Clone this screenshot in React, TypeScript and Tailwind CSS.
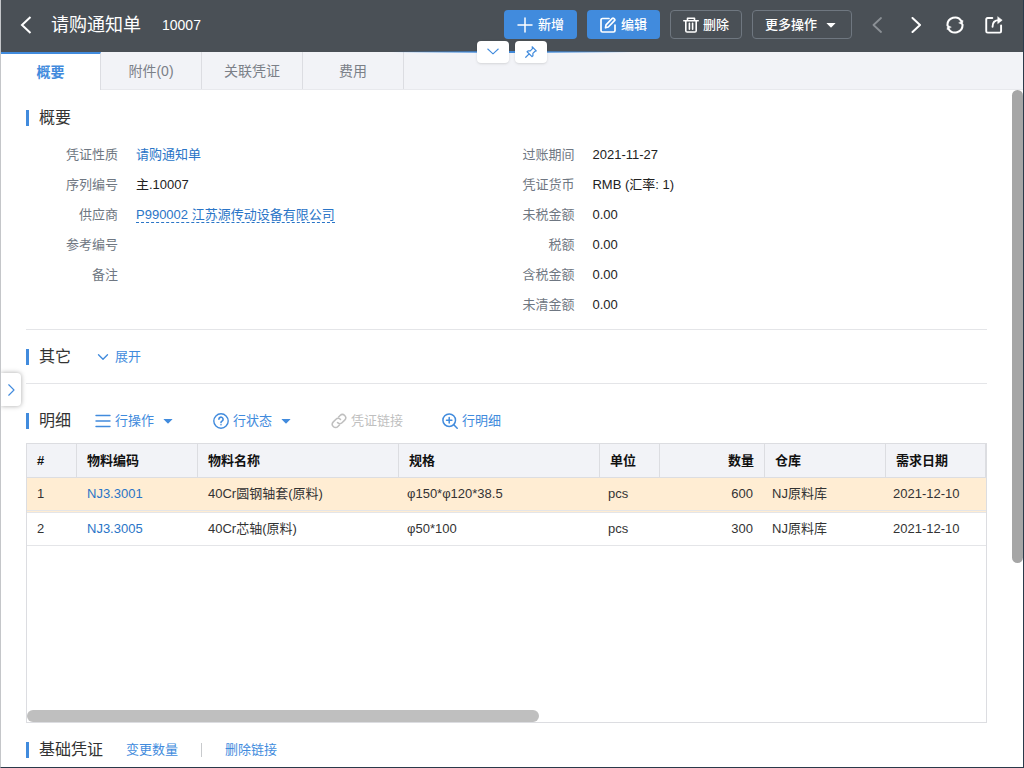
import { useState } from "react";
import type { ReactNode } from "react";
import { clsx } from "clsx";

type Field = { label: string; value?: string; kind?: "link" | "dashed" };

const leftFields: Field[] = [
  { label: "凭证性质", value: "请购通知单", kind: "link" },
  { label: "序列编号", value: "主.10007" },
  { label: "供应商", value: "P990002 江苏源传动设备有限公司", kind: "dashed" },
  { label: "参考编号" },
  { label: "备注" },
];

const rightFields: Field[] = [
  { label: "过账期间", value: "2021-11-27" },
  { label: "凭证货币", value: "RMB (汇率: 1)" },
  { label: "未税金额", value: "0.00" },
  { label: "税额", value: "0.00" },
  { label: "含税金额", value: "0.00" },
  { label: "未清金额", value: "0.00" },
];

const rows = [
  { id: 1, code: "NJ3.3001", name: "40Cr圆钢轴套(原料)", spec: "φ150*φ120*38.5", unit: "pcs", qty: 600, store: "NJ原料库", date: "2021-12-10" },
  { id: 2, code: "NJ3.3005", name: "40Cr芯轴(原料)", spec: "φ50*100", unit: "pcs", qty: 300, store: "NJ原料库", date: "2021-12-10" },
];

const tabs = ["概要", "附件(0)", "关联凭证", "费用"];

function Icon({ children, className = "size-4", width = 1.5 }: { children: ReactNode; className?: string; width?: number }) {
  return (
    <svg
      viewBox="0 0 16 16"
      className={clsx("shrink-0", className)}
      fill="none"
      stroke="currentColor"
      strokeWidth={width}
      strokeLinecap="round"
      strokeLinejoin="round"
      aria-hidden="true"
    >
      {children}
    </svg>
  );
}

function Caret({ className }: { className?: string }) {
  return (
    <svg viewBox="0 0 12 12" className={clsx("size-3 shrink-0", className)} fill="currentColor" aria-hidden="true">
      <path d="M2 4h8a.3.3 0 0 1 .2.600L6.500 8.300a.7.7 0 0 1-1 0L1.800 4.600A.3.3 0 0 1 2 4z" />
    </svg>
  );
}

function SectionTitle({ children }: { children: ReactNode }) {
  return (
    <h2 className="flex items-center gap-[10px] text-base leading-6 text-[#333]">
      <span className="h-4 w-[3px] bg-[#418bdd]" />
      {children}
    </h2>
  );
}

function FieldList({ fields }: { fields: Field[] }) {
  return (
    <dl>
      {fields.map((f) => (
        <div key={f.label} className="flex h-[30px] items-center gap-[18px]">
          <dt className="w-[92px] text-right text-[#6f7782]">{f.label}</dt>
          <dd className="text-[#222]">
            {f.kind ? (
              <a href="#" className={clsx("text-[#2a75c7]", f.kind === "dashed" && "border-b border-dashed border-[#2a75c7]")}>
                {f.value}
              </a>
            ) : (
              f.value
            )}
          </dd>
        </div>
      ))}
    </dl>
  );
}

function Header() {
  return (
    <header className="flex h-[52px] shrink-0 items-center bg-[#4a5056] pr-[10px] pb-[3px] pl-[17px] text-white">
      <button type="button" aria-label="返回" className="flex size-4 items-center justify-center">
        <svg viewBox="0 0 12 18" className="h-[18px] w-3" fill="none" stroke="currentColor" strokeWidth="2" aria-hidden="true">
          <path d="M10.5 1 2 9l8.500 8" />
        </svg>
      </button>
      <h1 className="ml-[17px] text-lg">请购通知单</h1>
      <span className="ml-[21px] text-sm">10007</span>

      <div className="ml-auto flex gap-[10px] text-[13px] font-medium">
        <button type="button" className="flex h-[29px] items-center gap-[5px] rounded bg-[#418bdd] px-[13px]">
          <Icon>
            <path d="M8 1v14M1 8h14" />
          </Icon>
          新增
        </button>
        <button type="button" className="flex h-[29px] items-center gap-[5px] rounded bg-[#418bdd] px-[13px]">
          <Icon width={1.7}>
            <path d="M9 1.500H2.500a1.500 1.500 0 0 0-1.500 1.500v10.500A1.500 1.500 0 0 0 2.500 15h11a1.500 1.500 0 0 0 1.500-1.500V8" />
            <path d="M5.500 10.800 6 7.800 12.300 1.400a1 1 0 0 1 1.400 0l.8.8a1 1 0 0 1 0 1.400L8.300 10z" />
          </Icon>
          编辑
        </button>
        <button type="button" className="flex h-[29px] items-center gap-1 rounded border border-[#6f7780] px-3">
          <Icon width={1.6}>
            <path d="M.8 3.800h14.400M4.500 3.800V1.200h7v2.600M2.800 3.800v9.900c0 .8.500 1.300 1.300 1.300h7.800c.8 0 1.300-.5 1.300-1.300V3.800M6.400 6.200v6M9.600 6.200v6" />
          </Icon>
          删除
        </button>
        <button type="button" className="flex h-[29px] items-center gap-2 rounded border border-[#6f7780] pr-[14px] pl-3">
          更多操作
          <Caret />
        </button>
      </div>

      <nav className="ml-[5px] flex">
        <button type="button" disabled aria-label="上一条" className="flex h-8 w-[39px] items-center justify-center text-[#8b9095]">
          <Icon className="size-4" width={1.8}>
            <path d="M12 1 4.500 8l7.500 7" />
          </Icon>
        </button>
        <button type="button" aria-label="下一条" className="flex h-8 w-[39px] items-center justify-center">
          <Icon className="size-4" width={2}>
            <path d="m4.500 1 7.500 7-7.500 7" />
          </Icon>
        </button>
        <button type="button" aria-label="刷新" className="flex h-8 w-[39px] items-center justify-center">
          <Icon className="size-[18px]" width={1.8}>
            <path d="M1.300 8.300A6.700 6.700 0 0 1 13.800 4.700M14.700 7.700A6.700 6.700 0 0 1 2.200 11.300" />
            <path d="m15 4.200-.4 3.500-3-1.500zM1 11.800l.4-3.500 3 1.500z" fill="currentColor" strokeWidth="0.5" />
          </Icon>
        </button>
        <button type="button" aria-label="在新窗口打开" className="flex h-8 w-[39px] items-center justify-center">
          <Icon className="size-[18px]" width={1.7}>
            <path d="M6.500 1.800H2.300c-.8 0-1.200.5-1.200 1.200v10.600c0 .8.500 1.200 1.200 1.200h10.800c.8 0 1.200-.5 1.200-1.200V8.500" />
            <path d="M6.700 9.500c0-3.500 2-5.800 5.800-5.800" />
            <path d="M11.500.8 15.300 3.700l-3.800 2.900z" fill="currentColor" strokeWidth="0.500" />
          </Icon>
        </button>
      </nav>
    </header>
  );
}

export default function App() {
  const [activeTab, setActiveTab] = useState("概要");
  const [selected, setSelected] = useState(1);

  return (
    <div className="relative flex h-screen flex-col overflow-hidden border-r border-b border-l border-r-[#2b3a4a] border-b-[#2b3a4a] border-l-[#c4c6c9] bg-white font-['Liberation_Sans','Noto_Sans_CJK_SC',sans-serif] text-[13px]">
      <Header />

      <div role="tablist" className="flex h-[38px] shrink-0 border-b border-[#e8e9ed] bg-[#f2f3f7] text-sm">
        {tabs.map((tab) => (
          <button
            key={tab}
            type="button"
            role="tab"
            aria-selected={tab === activeTab}
            onClick={() => setActiveTab(tab)}
            className={clsx(
              "border-r border-[#dcdde2]",
              tab === activeTab
                ? "-mb-px w-[100px] border-t-2 border-t-[#418bdd] bg-white font-bold text-[#418bdd]"
                : "w-[101px] text-[#7b8088]",
            )}
          >
            {tab}
          </button>
        ))}
      </div>

      {/* header toggles, over the header's bottom edge */}
      <div className="absolute top-[51px] left-1/2 h-[2px] w-60 -translate-x-1/2 bg-linear-to-r from-transparent via-[#418bdd] to-transparent" />
      <div className="absolute top-[41px] left-1/2 flex -translate-x-1/2 gap-[6px] text-[#418bdd]">
        <button type="button" aria-label="收起" className="flex h-[22px] w-8 items-center justify-center rounded-sm bg-white shadow">
          <Icon className="size-3" width={1.4}>
            <path d="m1 4 7 6.500L15 4" />
          </Icon>
        </button>
        <button type="button" aria-label="固定" className="flex h-[22px] w-8 items-center justify-center rounded-sm bg-white shadow">
          <Icon className="size-3" width={1.6}>
            <path d="m9.500 1 5.500 5.500-1.600.5-2.900 2.900.1 3.100-1.300 1.200L2.800 7.700l1.300-1.300 3 .1L10 3.600zM5.500 10.500 1 15" />
          </Icon>
        </button>
      </div>

      <main className="min-h-0 flex-1 overflow-hidden pt-4 pr-9 pl-[25px]">
        <section className="border-b border-[#e4e5e8] pb-[9px]">
          <SectionTitle>概要</SectionTitle>
          <div className="mt-[10px] grid grid-cols-[19fr_21fr]">
            <FieldList fields={leftFields} />
            <FieldList fields={rightFields} />
          </div>
        </section>

        <section className="flex items-center gap-[26px] border-b border-[#e4e5e8] pt-[15px] pb-[14px]">
          <SectionTitle>其它</SectionTitle>
          <button type="button" className="flex items-center gap-[6px] text-[#418bdd]">
            <Icon className="size-3" width={1.8}>
              <path d="m2 5 6 6 6-6" />
            </Icon>
            展开
          </button>
        </section>

        <section className="pt-[25px]">
          <div className="flex items-center gap-6">
            <SectionTitle>明细</SectionTitle>
            <div className="flex gap-[39px] text-[#418bdd]">
              <button type="button" className="flex items-center gap-1">
                <Icon width={1.4}>
                  <path d="M1 2.500h14M1 8h14M1 13.500h14" />
                </Icon>
                行操作
                <Caret className="ml-1" />
              </button>
              <button type="button" className="flex items-center gap-1">
                <Icon width={1.4}>
                  <circle cx="8" cy="8" r="7.200" />
                  <path d="M5.900 6.300a2.100 2.100 0 1 1 3.400 1.600C8.500 8.400 8 8.700 8 9.600M8 11.700v.1" strokeWidth="1.600" />
                </Icon>
                行状态
                <Caret className="ml-1" />
              </button>
              <button type="button" disabled className="flex items-center gap-1 text-[#bfbfbf]">
                <Icon width={1.5}>
                  <path d="M6.500 9.500a3 3 0 0 0 4.500.3l2.700-2.700a3.200 3.200 0 0 0-4.600-4.600L7.600 4" />
                  <path d="M9.500 6.500a3 3 0 0 0-4.500-.3L2.300 8.900a3.200 3.200 0 0 0 4.600 4.600L8.400 12" />
                </Icon>
                凭证链接
              </button>
              <button type="button" className="flex items-center gap-1">
                <Icon width={1.5}>
                  <circle cx="7.200" cy="7.200" r="6.300" />
                  <path d="M4.500 7.200h5.400M7.200 4.500v5.400M11.800 11.800l3.400 3.400" />
                </Icon>
                行明细
              </button>
            </div>
          </div>

          <div className="mt-[10px] flex h-[280px] flex-col justify-between border border-[#dcdde1]">
            <table className="w-full table-fixed border-separate border-spacing-0 text-left text-[#333]">
              <colgroup>
                <col className="w-[50px]" />
                <col className="w-[121px]" />
                <col className="w-[201px]" />
                <col className="w-[201px]" />
                <col className="w-[60px]" />
                <col className="w-[105px]" />
                <col className="w-[121px]" />
                <col />
              </colgroup>
              <thead className="bg-[#f2f3f7] text-[#111] [&_th]:h-[34px] [&_th]:border-r [&_th]:border-b [&_th]:border-[#dcdde1] [&_th]:px-[10px] [&_th]:font-bold">
                <tr>
                  <th>#</th>
                  <th>物料编码</th>
                  <th>物料名称</th>
                  <th>规格</th>
                  <th>单位</th>
                  <th className="text-right">数量</th>
                  <th>仓库</th>
                  <th>需求日期</th>
                </tr>
              </thead>
              <tbody>
                {rows.map((row) => (
                  <tr
                    key={row.id}
                    onClick={() => setSelected(row.id)}
                    className={clsx(
                      "[&>td]:border-[#e4e5e8]",
                      row.id === selected
                        ? "bg-[#ffedd3] [&>td]:h-[35px] [&>td]:border-b-3 [&>td]:border-double"
                        : "[&>td]:h-[33px] [&>td]:border-b",
                    )}
                  >
                    <td className="px-[10px]">{row.id}</td>
                    <td className="px-[10px]">
                      <a href="#" className="text-[#2a75c7]">{row.code}</a>
                    </td>
                    <td className="px-[10px]">{row.name}</td>
                    <td className="px-2">{row.spec}</td>
                    <td className="px-2">{row.unit}</td>
                    <td className="px-3 text-right">{row.qty}</td>
                    <td className="px-[7px]">{row.store}</td>
                    <td className="px-[7px]">{row.date}</td>
                  </tr>
                ))}
              </tbody>
            </table>
            <div className="h-3 w-[53.4%] rounded-full bg-[#bfbfbf]" />
          </div>
        </section>

        <section className="mt-[15px] flex items-center gap-[23px]">
          <SectionTitle>基础凭证</SectionTitle>
          <button type="button" className="text-[#418bdd]">变更数量</button>
          <span className="h-[14px] w-px bg-[#c8cacd]" />
          <button type="button" className="text-[#418bdd]">删除链接</button>
        </section>
      </main>

      {/* page scrollbar */}
      <div className="absolute top-[90px] right-0 h-[473px] w-[11px] rounded-full bg-[#a6a6a6]" />

      {/* side panel handle */}
      <button
        type="button"
        aria-label="展开侧栏"
        className="absolute top-[373px] left-0 flex h-[33px] w-5 items-center justify-center rounded-r bg-white text-[#418bdd] shadow-[0_0_5px_rgba(0,0,0,0.35)]"
      >
        <Icon className="size-3" width={1.5}>
          <path d="m5 1 7 7-7 7" />
        </Icon>
      </button>
    </div>
  );
}
